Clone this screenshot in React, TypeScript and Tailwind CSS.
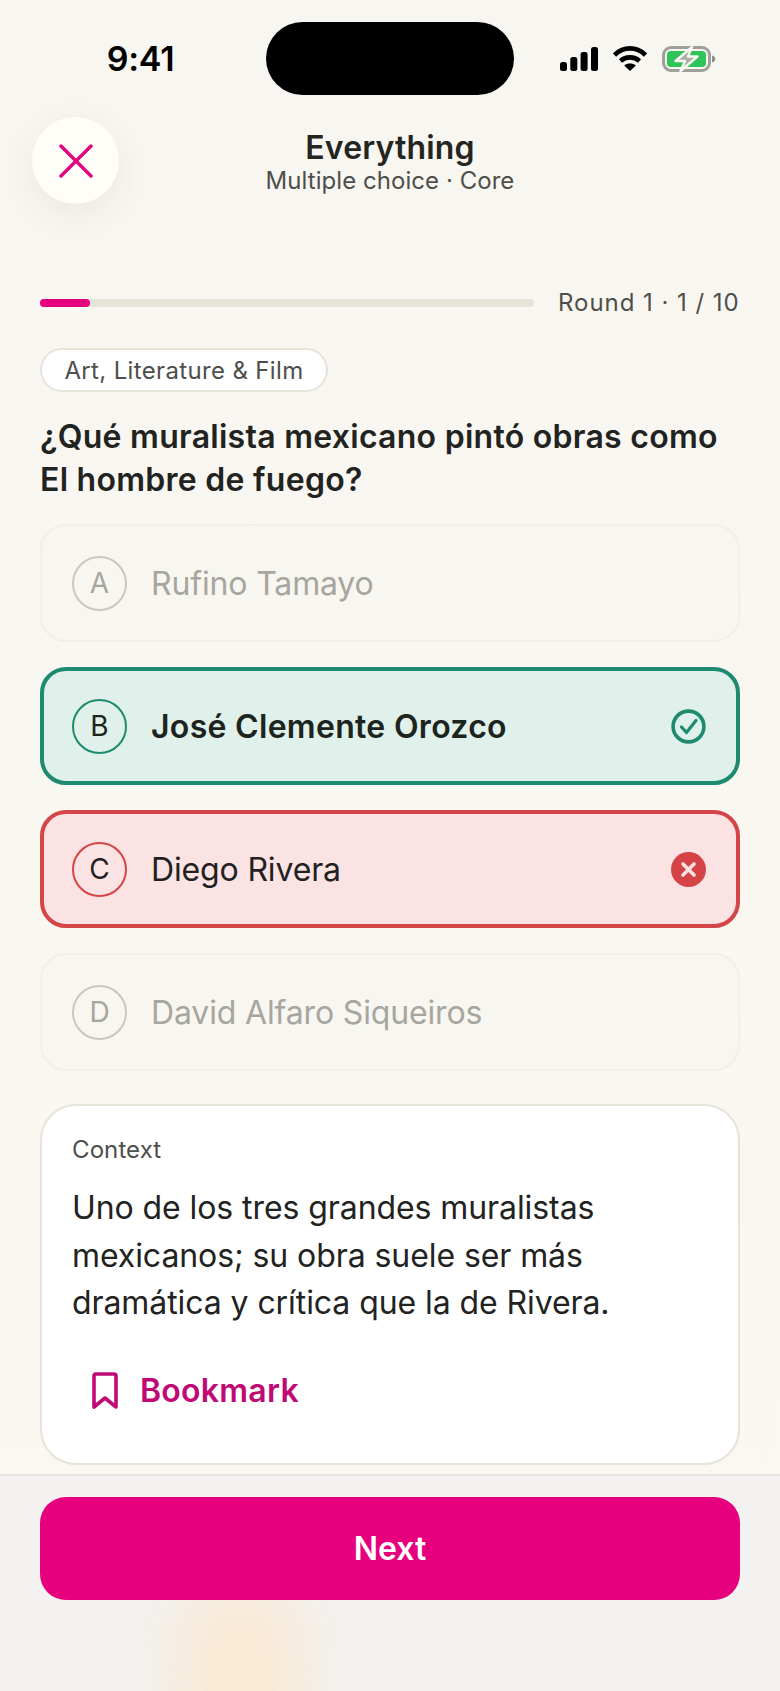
import React from "react";

const font = { fontFamily: "Inter, 'Liberation Sans', sans-serif" };

function Signal() {
  return (
    <svg width="38" height="24" viewBox="0 0 38 24" fill="#000">
      <rect x="0" y="15" width="7" height="9" rx="2.5" />
      <rect x="10.3" y="10" width="7" height="14" rx="2.5" />
      <rect x="20.6" y="5" width="7" height="19" rx="2.5" />
      <rect x="31" y="0" width="7" height="24" rx="2.5" />
    </svg>
  );
}

function Wifi() {
  return (
    <svg width="34" height="25" viewBox="0 0 34 25" fill="none" stroke="#000" strokeWidth="4.6">
      <path d="M1.5 9C10.5 0.2 23.5 0.2 32.5 9" />
      <path d="M7.5 15C12.8 10.2 21.2 10.2 26.5 15" />
      <path d="M17 25L11.2 19.4C14.4 16.8 19.6 16.8 22.8 19.4Z" fill="#000" stroke="none" />
    </svg>
  );
}

function Battery() {
  return (
    <svg width="54" height="26" viewBox="0 0 54 26" fill="none">
      <rect x="1.5" y="1.5" width="46" height="23" rx="7.5" stroke="#a0a09b" strokeWidth="3" />
      <rect x="5" y="5" width="39" height="16" rx="4" fill="#2fc457" />
      <path d="M50 9.5C52 10 53.3 11.3 53.3 13C53.3 14.7 52 16 50 16.5Z" fill="#8f8f8a" />
      <path d="M30 1L13.5 15H23L18.5 25L35.5 10.5H26Z" fill="#adada7" stroke="#f9f7f1" strokeWidth="2.4" strokeLinejoin="round" />
    </svg>
  );
}

type OptionProps = {
  letter: string;
  text: string;
  box: string;
  ring: string;
  label: string;
  letterColor: string;
  trailing?: React.ReactNode;
};

function Option({ letter, text, box, ring, label, letterColor, trailing }: OptionProps) {
  return (
    <div className={`flex h-[118px] items-center rounded-[26px] ${box}`}>
      <div className={`flex h-[55px] w-[55px] shrink-0 items-center justify-center rounded-full text-[28px] ${ring} ${letterColor}`}>
        {letter}
      </div>
      <div className={`ml-[24px] flex-1 pt-[2px] text-[32px] leading-[40px] ${label}`}>{text}</div>
      {trailing}
    </div>
  );
}

export default function App() {
  return (
    <div style={font} className="relative flex h-[1691px] w-[780px] flex-col overflow-hidden bg-gradient-to-b from-[#f8f6f1] to-[#fbf8f1] text-[#20211e]">
      <div className="mt-[22px] flex h-[73px] items-center">
        <div className="w-[266px] pl-[15px] text-center text-[34px] font-semibold leading-[40px] tracking-[-0.2px] text-black">9:41</div>
        <div className="h-[73px] w-[248px] rounded-[37px] bg-black" />
        <div className="ml-[46px] flex items-center">
          <Signal />
          <div className="ml-[15px]"><Wifi /></div>
          <div className="ml-[15px]"><Battery /></div>
        </div>
      </div>

      <div className="mt-[22px] grid h-[87px] grid-cols-[87px_1fr_87px] items-start px-[32px]">
        <div className="flex h-[87px] w-[87px] items-center justify-center rounded-full bg-[#fefdf8] shadow-[0_10px_36px_rgba(60,50,30,0.07)]">
          <svg width="34" height="34" viewBox="0 0 34 34" fill="none" stroke="#e0047f" strokeWidth="3.4" strokeLinecap="round">
            <path d="M2 2L32 32" />
            <path d="M32 2L2 32" />
          </svg>
        </div>
        <div className="flex flex-col items-center pt-[12px]">
          <div className="text-[32px] font-semibold leading-[38px] tracking-[0.15px] text-[#24251f]">Everything</div>
          <div className="text-[24px] leading-[28px] tracking-[0.05px] text-[#4e4e4a]">Multiple choice · Core</div>
        </div>
        <div />
      </div>

      <div className="flex flex-1 flex-col px-[40px]">
        <div className="mt-[83px] flex h-[32px] items-center">
          <div className="h-[8px] w-[494px] rounded-full bg-[#e6e3d9]">
            <div className="h-[8px] w-[50px] rounded-full bg-[#e6007e]" />
          </div>
          <div className="ml-[24px] whitespace-nowrap text-[24px] leading-[32px] tracking-[0.95px] text-[#4e4e4a]">Round 1 · 1 / 10</div>
        </div>

        <div className="mt-[29px] flex h-[44px] w-[288px] items-center justify-center rounded-full border-2 border-[#e6e3d9] bg-white pt-[1px] text-[24px] tracking-[0.35px] text-[#4e4e4a]">
          Art, Literature &amp; Film
        </div>

        <div className="mt-[23px] text-[32px] font-semibold leading-[44px] tracking-[0.27px] text-[#22231f]">
          ¿Qué muralista mexicano pintó obras como
          <br />
          <span className="relative -top-[1px]">El hombre de fuego?</span>
        </div>

        <div className="mt-[21px] flex flex-col gap-[25px]">
          <Option letter="A" text="Rufino Tamayo" box="border-2 border-[#f2efe7] bg-[#f8f6f0] pl-[30px] pr-[32px]" ring="border-2 border-[#c9c8c0]" label="tracking-[-0.15px] text-[#a7a69e]" letterColor="text-[#a7a69e]" />
          <Option
            letter="B"
            text="José Clemente Orozco"
            box="border-4 border-[#1e8a6f] bg-[#dff1ea] pl-[28px] pr-[30px]"
            ring="border-2 border-[#1e8a6f]"
            label="font-semibold tracking-[0.3px] text-[#1d2420]"
            letterColor="text-[#1d2420]"
            trailing={
              <svg width="35" height="35" viewBox="0 0 35 35" fill="none" stroke="#1e8a6f">
                <circle cx="17.5" cy="17.5" r="15.4" strokeWidth="3.6" />
                <path d="M10.5 18L15.5 23.5L25 11.5" strokeWidth="3.2" strokeLinecap="round" strokeLinejoin="round" />
              </svg>
            }
          />
          <Option
            letter="C"
            text="Diego Rivera"
            box="border-4 border-[#d34547] bg-[#fbe3e3] pl-[28px] pr-[30px]"
            ring="border-2 border-[#d34547]"
            label="tracking-[-0.15px] text-[#22211f]"
            letterColor="text-[#22211f]"
            trailing={
              <svg width="35" height="35" viewBox="0 0 35 35" fill="none">
                <circle cx="17.5" cy="17.5" r="17.5" fill="#d64346" />
                <path d="M12 12L23 23M23 12L12 23" stroke="#fbe3e3" strokeWidth="3.6" strokeLinecap="round" />
              </svg>
            }
          />
          <Option letter="D" text="David Alfaro Siqueiros" box="border-2 border-[#f2efe7] bg-[#f8f6f0] pl-[30px] pr-[32px]" ring="border-2 border-[#c9c8c0]" label="tracking-[-0.15px] text-[#a7a69e]" letterColor="text-[#a7a69e]" />
        </div>

        <div className="mt-[33px] h-[361px] rounded-[36px] border-2 border-[#e6e3d9] bg-white pl-[30px] pt-[28px]">
          <div className="text-[24px] leading-[32px] tracking-[0.1px] text-[#4e4e4a]">Context</div>
          <div className="mt-[18px] text-[32px] leading-[47.5px] tracking-[-0.08px] text-[#22231f]">
            Uno de los tres grandes muralistas
            <br />
            mexicanos; su obra suele ser más
            <br />
            dramática y crítica que la de Rivera.
          </div>
          <div className="mt-[44px] flex items-center pl-[20px]">
            <svg width="26" height="37" viewBox="0 0 26 37" fill="none" stroke="#bf0a76" strokeWidth="3.6" strokeLinejoin="round" strokeLinecap="round">
              <path d="M4 2H22Q24 2 24 4V35L13 26L2 35V4Q2 2 4 2Z" />
            </svg>
            <div className="ml-[22px] text-[32px] font-semibold leading-[40px] tracking-[0.25px] text-[#bf0a76]">Bookmark</div>
          </div>
        </div>
      </div>

      <div className="relative h-[217px] overflow-hidden border-t-2 border-[#e8e6df] bg-[#f3f2f0]">
        <div className="absolute bottom-[-80px] left-[175px] h-[190px] w-[130px] rounded-full bg-[#f9e9d4] blur-[30px]" />
        <div className="relative mx-[40px] mt-[21px] flex h-[103px] items-center justify-center rounded-[26px] bg-[#e6007e] text-[32px] font-semibold text-white">
          Next
        </div>
      </div>
    </div>
  );
}
